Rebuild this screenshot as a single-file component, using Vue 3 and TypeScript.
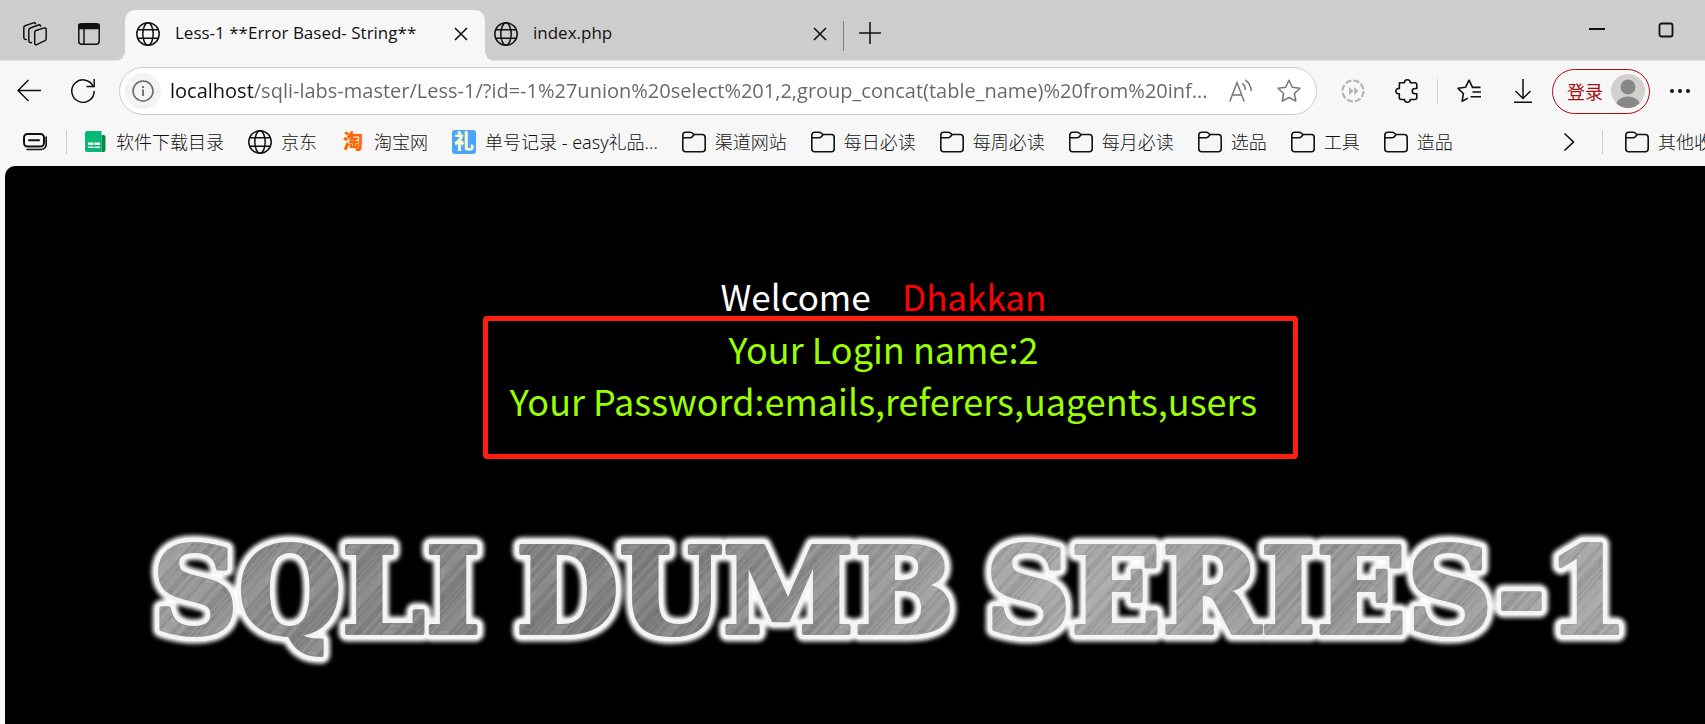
<script setup lang="ts">
import { ref } from 'vue'

interface Bookmark {
  label: string
  icon: 'sheet' | 'globe' | 'tao' | 'gift' | 'folder'
}

const address = ref(
  'localhost/sqli-labs-master/Less-1/?id=-1%27union%20select%201,2,group_concat(table_name)%20from%20inf...',
)

const bookmarks: Bookmark[] = [
  { label: '软件下载目录', icon: 'sheet' },
  { label: '京东', icon: 'globe' },
  { label: '淘宝网', icon: 'tao' },
  { label: '单号记录 - easy礼品...', icon: 'gift' },
  { label: '渠道网站', icon: 'folder' },
  { label: '每日必读', icon: 'folder' },
  { label: '每周必读', icon: 'folder' },
  { label: '每月必读', icon: 'folder' },
  { label: '选品', icon: 'folder' },
  { label: '工具', icon: 'folder' },
  { label: '造品', icon: 'folder' },
]

const tabs = [
  { title: 'Less-1 **Error Based- String**', active: true },
  { title: 'index.php', active: false },
]
</script>

<template>
  <div class="browser">
    <svg class="defs" aria-hidden="true">
      <symbol id="globe" viewBox="0 0 24 24">
        <g fill="none" stroke="currentColor" stroke-width="1.5">
          <circle cx="12" cy="12" r="11.2" />
          <ellipse cx="12" cy="12" rx="5.2" ry="11.2" />
          <path d="M1.8 7.8h20.4M1.8 16.2h20.4" />
        </g>
      </symbol>
      <symbol id="folder" viewBox="0 0 24 24">
        <g fill="none" stroke="currentColor" stroke-width="1.6" stroke-linejoin="round">
          <path d="M.8 5.200a3 3 0 0 1 3-3h4.400c.8 0 1.500.3 2 .8l1.700 1.500h8.300a3 3 0 0 1 3 3v11.200a3 3 0 0 1-3 3H3.800a3 3 0 0 1-3-3z" />
          <path d="M.8 7.700h7.400c.7 0 1.400-.3 1.900-.8l2-2.200" />
        </g>
      </symbol>
      <symbol id="close" viewBox="0 0 14 14">
        <path d="M1 1l12 12M13 1L1 13" fill="none" stroke="currentColor" stroke-width="1.600" />
      </symbol>
    </svg>

    <header class="tabstrip">
      <button class="icon-btn" aria-label="Workspaces">
        <svg width="24" height="24" viewBox="0 0 24 24" fill="none" stroke="currentColor" stroke-width="1.500" stroke-linejoin="round" stroke-linecap="round">
          <path d="M13 8.500l8.300-2.600c1-.3 1.900.3 1.900 1.300v9.600c0 .8-.5 1.500-1.200 1.800l-8.300 4c-1 .4-2-.2-2-1.300V10.400c0-.9.500-1.600 1.300-1.900z" />
          <path d="M8.500 20.500c-1.500.5-2.700-.3-2.700-1.800V8.200c0-1 .6-1.800 1.500-2.200L15.500 3c1-.3 1.900.1 2.200 1" />
          <path d="M3.300 17.500C1.700 17.600.8 16.700.8 15.200V5.800c0-1 .5-1.700 1.400-2.100L10.300.9c1-.3 1.900 0 2.300.8" />
        </svg>
      </button>
      <button class="icon-btn" aria-label="Tab actions">
        <svg width="22" height="22" viewBox="0 0 22 22" fill="none" stroke="currentColor" stroke-width="1.500">
          <rect x=".8" y=".8" width="20.400" height="20.400" rx="3" />
          <path d="M1 1.500h20v4H1z" fill="currentColor" />
          <path d="M6 6v15" />
        </svg>
      </button>
      <nav class="tabs" aria-label="Tabs">
        <div v-for="tab in tabs" :key="tab.title" class="tab" :class="{ active: tab.active }">
          <svg class="i24"><use href="#globe" /></svg>
          <a class="tab-title" href="#">{{ tab.title }}</a>
          <button class="tab-close" aria-label="Close tab">
            <svg width="14" height="14"><use href="#close" /></svg>
          </button>
        </div>
      </nav>
      <button class="new-tab" aria-label="New tab">
        <svg width="22" height="22" viewBox="0 0 22 22" fill="none" stroke="currentColor" stroke-width="1.500">
          <path d="M0 11h22M11 0v22" />
        </svg>
      </button>
      <div class="window-controls">
        <button aria-label="Minimize">
          <svg width="16" height="16" viewBox="0 0 16 16"><path d="M0 7h16" stroke="currentColor" stroke-width="2" /></svg>
        </button>
        <button aria-label="Maximize">
          <svg width="16" height="16" viewBox="0 0 16 16"><rect x="1.500" y="1.500" width="13" height="13" rx="2" fill="none" stroke="currentColor" stroke-width="1.800" /></svg>
        </button>
      </div>
    </header>

    <div class="toolbar">
      <button class="icon-btn" aria-label="Back">
        <svg class="i24" viewBox="0 0 24 24" fill="none" stroke="currentColor" stroke-width="1.500"><path d="M24 11.500H1M11.500 1L1 11.500 11.500 22" /></svg>
      </button>
      <button class="icon-btn" aria-label="Refresh">
        <svg class="i24" viewBox="0 0 24 24" fill="none" stroke="currentColor" stroke-width="1.500"><path d="M22.500 8.200A11.200 11.200 0 1 0 23.200 12M23.200 0v7.500h-7.700" /></svg>
      </button>
      <div class="address">
        <button class="site-info" aria-label="Site information">
          <svg width="22" height="22" viewBox="0 0 22 22" fill="none" stroke="#666" stroke-width="1.500"><circle cx="11" cy="11" r="10" /><path d="M11 9.500V16" stroke-width="1.800" /><path d="M11 6v2" stroke-width="1.800" /></svg>
        </button>
        <input v-model="address" class="url" type="text" aria-label="Address" />
        <button class="icon-btn grey" aria-label="Read aloud">
          <svg class="i24" viewBox="0 0 24 24" fill="none" stroke="currentColor" stroke-width="1.500"><path d="M.8 22.500L8 3.500l7.200 19M3.300 16h9.400M13.300 4.300c2 1.500 3 4 3 6.800M16.200.8c3.700 2.700 5.800 6.400 6 11.300" /></svg>
        </button>
        <button class="icon-btn grey" aria-label="Add to favorites">
          <svg class="i24" viewBox="0 0 24 24" fill="none" stroke="currentColor" stroke-width="1.500" stroke-linejoin="round"><path d="M12 1.200l3.300 7 7.600 1-5.500 5.300 1.400 7.700L12 18.500l-6.800 3.700 1.400-7.700L1.100 9.200l7.600-1z" /></svg>
        </button>
      </div>
      <button class="icon-btn pale" aria-label="Speed control">
        <svg class="i24" viewBox="0 0 24 24" fill="none" stroke="currentColor" stroke-width="2.200"><circle cx="12" cy="12" r="10.500" stroke-dasharray="6.200 2.050" /><path d="M8 8v8l4.500-4zM13 8v8l4.500-4z" fill="currentColor" stroke="none" /></svg>
      </button>
      <button class="icon-btn puzzle" aria-label="Extensions">
        <svg class="i24" viewBox="0 0 24 24" fill="none" stroke="currentColor" stroke-width="1.600" stroke-linejoin="round"><path d="M4.500 3.800h5C9.300 2 10.500.8 12.300.8S15.500 2 15.300 3.800h4.500c1.300 0 2 .7 2 2v3.700h-1.600c-1.800 0-3 1-3 2.600s1.200 2.700 3 2.700h1.600v3.700c0 1.300-.7 2-2 2h-4.500c.1 1.600-1.200 2.700-3 2.700s-3-1.100-2.800-2.700H6.300c-1.300 0-2-.7-2-2v-3.600C2.200 14.900.8 13.700.8 12.100s1.400-2.900 3.500-2.700z" /></svg>
      </button>
      <span class="divider"></span>
      <button class="icon-btn" aria-label="Favorites">
        <svg class="i24" viewBox="0 0 24 24" fill="none" stroke="currentColor" stroke-width="1.600" stroke-linejoin="round"><path d="M23.500 8.400h-8L12 1.200 8.600 8.200 1 9.300l5.400 5.200-1.300 7.700 5.900-3.100" /><path d="M15.500 13H24M13.500 17.800H24" /></svg>
      </button>
      <button class="icon-btn download" aria-label="Downloads">
        <svg class="i24" viewBox="0 0 24 24" fill="none" stroke="currentColor" stroke-width="1.500"><path d="M12 0v19M4.500 12l7.500 7.500 7.500-7.500M3 23.200h18" /></svg>
      </button>
      <button class="profile">
        <span>登录</span>
        <svg width="34" height="34" viewBox="0 0 34 34"><clipPath id="face"><circle cx="17" cy="17" r="17" /></clipPath><g clip-path="url(#face)"><path d="M0 0h34v34H0z" fill="#d2d0ce" /><circle cx="17" cy="13" r="7.500" fill="#8a8886" /><ellipse cx="17" cy="33" rx="12.500" ry="10.500" fill="#8a8886" /></g></svg>
      </button>
      <button class="icon-btn more" aria-label="Settings and more">
        <svg width="22" height="6" viewBox="0 0 22 6" fill="currentColor"><circle cx="3" cy="3" r="2" /><circle cx="11" cy="3" r="2" /><circle cx="19" cy="3" r="2" /></svg>
      </button>
    </div>

    <nav class="bookmarks" aria-label="Bookmarks">
      <button class="icon-btn" aria-label="Sidebar">
        <svg class="i24" viewBox="0 0 24 24" fill="none" stroke="currentColor" stroke-width="1.600" stroke-linecap="round"><rect x="1" y="4" width="20" height="12.500" rx="3.500" stroke-width="2" /><path d="M6 10.300h10" stroke-width="2" /><path d="M23.200 7v7.500a5 5 0 0 1-5 5H4" /></svg>
      </button>
      <span class="divider"></span>
      <a v-for="b in bookmarks" :key="b.label" class="bookmark" href="#">
        <svg v-if="b.icon === 'sheet'" class="i24" viewBox="0 0 24 24">
          <path d="M4 1h14.500v21H4a2 2 0 0 1-2-2V3a2 2 0 0 1 2-2z" fill="#07b973" />
          <path d="M18.500 5h2a2 2 0 0 1 2 2v13a2 2 0 0 1-2 2h-2z" fill="#078a50" />
          <path d="M5 12.500h5.500V15H5zM11.500 12.500H17V15h-5.500zM5 16.500h5.500V18H5zM11.500 16.500H17V18h-5.500z" fill="#fff" />
        </svg>
        <svg v-else-if="b.icon === 'globe'" class="i24"><use href="#globe" /></svg>
        <span v-else-if="b.icon === 'tao'" class="glyph tao" aria-hidden="true">淘</span>
        <span v-else-if="b.icon === 'gift'" class="glyph gift" aria-hidden="true">礼</span>
        <svg v-else class="i24"><use href="#folder" /></svg>
        <span>{{ b.label }}</span>
      </a>
      <button class="icon-btn overflow" aria-label="More bookmarks">
        <svg width="12" height="20" viewBox="0 0 12 20" fill="none" stroke="currentColor" stroke-width="1.600"><path d="M1.500 1.500L10.500 10l-9 8.500" /></svg>
      </button>
      <span class="divider"></span>
      <a class="bookmark" href="#">
        <svg class="i24"><use href="#folder" /></svg>
        <span>其他收藏夹</span>
      </a>
    </nav>

    <main class="page">
      <div class="content">
        <section class="result">
          <p class="welcome">Welcome &nbsp;&nbsp; <span>Dhakkan</span></p>
          <p>Your Login name:2</p>
          <p>Your Password:emails,referers,uagents,users</p>
          <div class="highlight"></div>
        </section>
        <svg class="banner" viewBox="0 0 1500 160" role="img" aria-label="SQLI DUMB SERIES-1">
          <defs>
            <linearGradient id="steel" x1="0" y1="0" x2="1500" y2="160" gradientUnits="userSpaceOnUse">
              <stop offset="0" stop-color="#a0a0a0" />
              <stop offset=".12" stop-color="#888" />
              <stop offset=".35" stop-color="#808080" />
              <stop offset=".5" stop-color="#9a9a9a" />
              <stop offset=".62" stop-color="#aaa" />
              <stop offset=".8" stop-color="#969696" />
              <stop offset="1" stop-color="#a8a8a8" />
            </linearGradient>
            <pattern id="brushed" width="83" height="400" patternUnits="userSpaceOnUse" patternTransform="rotate(42)">
              <path d="M2 0v400M9 0v400M23 0v400M31 0v400M52 0v400M58 0v400M77 0v400" stroke="#fff" stroke-opacity=".12" />
              <path d="M5 0v400M15 0v400M27 0v400M43 0v400M47 0v400M66 0v400M71 0v400" stroke="#000" stroke-opacity=".1" />
              <path d="M19 0v400M62 0v400" stroke="#fff" stroke-opacity=".07" stroke-width="5" />
              <path d="M37 0v400M80 0v400" stroke="#000" stroke-opacity=".06" stroke-width="6" />
            </pattern>
            <filter id="glow" x="-5%" y="-30%" width="110%" height="160%">
              <feGaussianBlur stdDeviation="2" />
            </filter>
            <g id="title">
              <text x="24" y="115">SQLI</text>
              <text x="385" y="115">DUMB</text>
              <text x="851" y="115">SERIES-1</text>
            </g>
          </defs>
          <use href="#title" class="halo" filter="url(#glow)" />
          <use href="#title" class="edge" />
          <use href="#title" class="metal" />
          <use href="#title" class="grain" />
        </svg>
      </div>
    </main>
  </div>
</template>

<style>
body {
  margin: 0;
  background: #f7f7f7;
  overflow: hidden;
}
</style>

<style scoped>
.browser {
  display: flex;
  flex-direction: column;
  min-height: 100vh;
  overflow: hidden;
  background: #f7f7f7;
  color: #111;
  font-family: "Open Sans", "Noto Sans CJK SC", sans-serif;
  font-size: 18px;
}
.defs {
  position: absolute;
  width: 0;
  height: 0;
}
button {
  display: flex;
  align-items: center;
  justify-content: center;
  flex: none;
  padding: 0;
  border: 0;
  background: none;
  color: inherit;
  font: inherit;
}
a {
  color: inherit;
  text-decoration: none;
}
svg {
  display: block;
  flex: none;
}
.i24 {
  width: 24px;
  height: 24px;
}
.divider {
  flex: none;
  width: 1px;
  height: 24px;
  background: #ccc;
}

.tabstrip {
  display: flex;
  align-items: center;
  height: 61px;
  box-sizing: border-box;
  padding-left: 23px;
  background: #cdcdcd;
  border-bottom: 1px solid #e2e2e2;
}
.tabstrip > .icon-btn {
  margin-top: 8px;
  margin-right: 31px;
}
.tabstrip > .icon-btn + .icon-btn {
  margin-right: 25px;
}
.tabs {
  display: flex;
  align-self: flex-end;
  margin-bottom: -1px;
}
.tab {
  position: relative;
  display: flex;
  align-items: center;
  width: 359px;
  height: 51px;
  box-sizing: border-box;
  padding: 0 17px 3px 9px;
  font-size: 17px;
  line-height: 22px;
}
.tab.active {
  width: 360px;
  padding-left: 11px;
  background: #f7f7f7;
  border-radius: 10px 10px 0 0;
}
.tab.active::before,
.tab.active::after {
  content: "";
  position: absolute;
  bottom: 0;
  left: -10px;
  width: 10px;
  height: 10px;
  background: radial-gradient(circle at 0 0, transparent 10px, #f7f7f7 10px);
}
.tab.active::after {
  left: 100%;
  background: radial-gradient(circle at 100% 0, transparent 10px, #f7f7f7 10px);
}
.tab + .tab::after {
  content: "";
  position: absolute;
  top: 11px;
  right: 0;
  width: 1px;
  height: 30px;
  background: #808080;
}
.tab-title {
  flex: 1;
  margin-left: 15px;
  padding-bottom: 2px;
  white-space: nowrap;
}
.new-tab {
  margin: 6px 0 0 15px;
}
.window-controls {
  display: flex;
  gap: 53px;
  margin-left: auto;
  padding-right: 31px;
}

.toolbar {
  display: flex;
  align-items: center;
  height: 60px;
  padding: 0 14px 0 17px;
}
.toolbar > .icon-btn {
  margin-right: 30px;
}
.toolbar > .icon-btn + .icon-btn {
  margin-right: 24px;
}
.address {
  display: flex;
  flex: 1;
  align-items: center;
  min-width: 0;
  height: 48px;
  box-sizing: border-box;
  padding: 0 15px 0 5px;
  background: #fff;
  border: 1px solid #ccc;
  border-radius: 24px;
}
.site-info {
  width: 36px;
  height: 36px;
  background: #f3f3f3;
  border-radius: 50%;
}
.url {
  flex: 1;
  min-width: 0;
  margin-left: 9px;
  padding: 0;
  border: 0;
  outline: 0;
  background: linear-gradient(90deg, #111 83px, #666 83px);
  background-clip: text;
  -webkit-background-clip: text;
  color: transparent;
  font: 20px/30px "Open Sans", sans-serif;
}
.address .icon-btn {
  margin-left: 16px;
}
.address .icon-btn + .icon-btn {
  margin-left: 24px;
}
.grey {
  color: #777;
}
.toolbar > .pale {
  margin: 0 30px 0 24px;
  color: #b4b4b4;
}
.toolbar > .puzzle {
  margin-right: 17px;
}
.toolbar > .icon-btn.puzzle {
  margin-right: 18px;
}
.toolbar > .divider + .icon-btn {
  margin: 0 30px 0 19px;
}
.toolbar > .icon-btn.download {
  margin-right: 17px;
}
.profile {
  gap: 8px;
  height: 45px;
  box-sizing: border-box;
  padding: 0 4px 0 14px;
  border: 1px solid #a80f14;
  border-radius: 23px;
  color: #a80f14;
}
.toolbar > .icon-btn.more {
  margin: 0 0 0 19px;
}

.bookmarks {
  display: flex;
  align-items: center;
  height: 45px;
  box-sizing: border-box;
  padding: 0 0 3px 23px;
  font-family: "Noto Sans", "Noto Sans CJK SC", sans-serif;
  white-space: nowrap;
}
.bookmarks > .divider {
  margin: 0 16px 0 19px;
}
.bookmark {
  display: flex;
  flex: none;
  align-items: center;
  gap: 9px;
  margin-right: 24px;
  font-weight: 300;
  line-height: 22px;
}
.glyph {
  width: 24px;
  height: 24px;
  border-radius: 3px;
  font-size: 20px;
  font-weight: 900;
  line-height: 23px;
  text-align: center;
}
.tao {
  color: #ff6600;
}
.gift {
  background: #4ba3fb;
  color: #fbfbc8;
}
.overflow {
  margin-left: auto;
}
.bookmarks > .overflow + .divider {
  margin: 0 22px 0 27px;
}
.bookmarks > .divider + .bookmark:last-child {
  width: 80px;
  margin: 0;
}

.page {
  flex: 1;
  margin-left: 5px;
  overflow: hidden;
  background: #000;
  border-radius: 10px 0 0 0;
}
.content {
  display: flex;
  flex-direction: column;
  align-items: center;
  margin-right: -57px;
  padding-top: 104px;
}
.result {
  position: relative;
  color: #99ff00;
  font: 36px/52px "Noto Sans CJK SC", sans-serif;
  text-align: center;
}
.result p {
  margin: 0;
}
.result .welcome {
  color: #fff;
  font-size: 35px;
}
.welcome span {
  color: #f00;
}
.highlight {
  position: absolute;
  top: 46px;
  right: -41px;
  bottom: -33px;
  left: -27px;
  border: 5px solid #ff1e10;
  border-radius: 4px;
}
.banner {
  width: 86%;
  margin-top: 91px;
  font-family: "DejaVu Serif", serif;
  font-size: 118px;
  font-weight: 700;
  stroke-linejoin: round;
}
.halo {
  fill: #fff;
  stroke: #fff;
  stroke-width: 17px;
}
.edge {
  fill: #f4f4f4;
  stroke: #f4f4f4;
  stroke-width: 12px;
}
.metal {
  fill: url(#steel);
  stroke: url(#steel);
  stroke-width: 4px;
}
.grain {
  fill: url(#brushed);
  stroke: url(#brushed);
  stroke-width: 4px;
}
</style>
